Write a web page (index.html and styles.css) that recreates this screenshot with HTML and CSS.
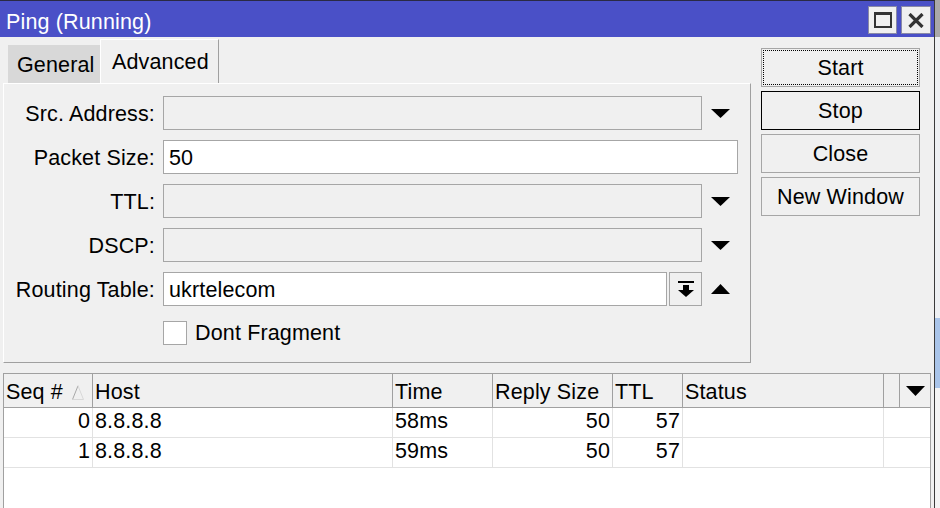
FILE: index.html
```html
<!DOCTYPE html>
<html>
<head>
<meta charset="utf-8">
<title>Ping (Running)</title>
<link rel="stylesheet" href="styles.css">
</head>
<body>
<div class="desktop">
  <div class="window">
    <div class="titlebar">
      <span class="title">Ping (Running)</span>
      <div class="win-ctrls">
        <span class="ctrl">
          <svg width="18" height="16" viewBox="0 0 18 16"><rect x="1" y="1" width="16" height="14" fill="none" stroke="#333" stroke-width="2"/><rect x="0" y="0" width="18" height="3" fill="#333"/></svg>
        </span>
        <span class="ctrl close">
          <svg width="16" height="15" viewBox="0 0 16 15"><path d="M1.5 1 L14.5 14 M14.5 1 L1.5 14" stroke="#333" stroke-width="3.2" fill="none"/></svg>
        </span>
      </div>
    </div>

    <div class="main">
      <div class="left">
        <div class="tabs">
          <div class="tab general">General</div>
          <div class="tab advanced">Advanced</div>
        </div>
        <div class="panel">
          <div class="form">
            <div class="lbl">Src. Address:</div>
            <div class="field">
              <div class="input dis w-drop"></div>
              <span class="slot"><svg width="19" height="9" viewBox="0 0 19 9"><polygon points="0,0 19,0 9.5,9" fill="#000"/></svg></span>
            </div>

            <div class="lbl">Packet Size:</div>
            <div class="field">
              <div class="input w-full">50</div>
            </div>

            <div class="lbl">TTL:</div>
            <div class="field">
              <div class="input dis w-drop"></div>
              <span class="slot"><svg width="19" height="9" viewBox="0 0 19 9"><polygon points="0,0 19,0 9.5,9" fill="#000"/></svg></span>
            </div>

            <div class="lbl">DSCP:</div>
            <div class="field">
              <div class="input dis w-drop"></div>
              <span class="slot"><svg width="19" height="9" viewBox="0 0 19 9"><polygon points="0,0 19,0 9.5,9" fill="#000"/></svg></span>
            </div>

            <div class="lbl">Routing Table:</div>
            <div class="field">
              <div class="input w-route">ukrtelecom</div>
              <span class="rbtn"><svg width="16" height="16" viewBox="0 0 16 16"><rect x="0" y="0" width="16" height="2" fill="#000"/><rect x="5" y="4" width="6" height="6" fill="#000"/><polygon points="0,9 16,9 8,16" fill="#000"/></svg></span>
              <span class="slot"><svg width="19" height="10" viewBox="0 0 19 10"><polygon points="0,10 19,10 9.5,0" fill="#000"/></svg></span>
            </div>

            <div class="lbl"></div>
            <div class="field check">
              <span class="box"></span>
              <span>Dont Fragment</span>
            </div>
          </div>
        </div>
      </div>

      <div class="actions">
        <div class="btn focus">Start</div>
        <div class="btn default">Stop</div>
        <div class="btn">Close</div>
        <div class="btn">New Window</div>
      </div>
    </div>

    <div class="table">
      <div class="row head">
        <div class="c">Seq #<svg class="sort" width="12" height="15" viewBox="0 0 12 15"><path d="M0.5 14.5 L6 0.8" stroke="#a8a8a8" stroke-width="1" fill="none"/><path d="M6 0.8 L11.5 14.5 L0.5 14.5" stroke="#d8d8d8" stroke-width="1" fill="none"/></svg></div>
        <div class="c">Host</div>
        <div class="c">Time</div>
        <div class="c">Reply Size</div>
        <div class="c">TTL</div>
        <div class="c">Status</div>
        <div class="c"></div>
        <div class="c last"><svg width="19" height="10" viewBox="0 0 19 10"><polygon points="0,0 19,0 9.5,10" fill="#000"/></svg></div>
      </div>
      <div class="row data">
        <div class="c num">0</div>
        <div class="c">8.8.8.8</div>
        <div class="c">58ms</div>
        <div class="c num">50</div>
        <div class="c num">57</div>
        <div class="c"></div>
        <div class="c span2"></div>
      </div>
      <div class="row data">
        <div class="c num">1</div>
        <div class="c">8.8.8.8</div>
        <div class="c">59ms</div>
        <div class="c num">50</div>
        <div class="c num">57</div>
        <div class="c"></div>
        <div class="c span2"></div>
      </div>
    </div>
  </div>
  <div class="behind"></div>
</div>
</body>
</html>
```

FILE: styles.css
```css
* { box-sizing: border-box; }

html, body {
  margin: 0;
  padding: 0;
}

body {
  width: 940px;
  height: 508px;
  overflow: hidden;
  font-family: "Liberation Sans", Arial, sans-serif;
  font-size: 21.5px;
  letter-spacing: 0.15px;
  color: #000;
  background: #f0f0f0;
}

.desktop {
  display: flex;
  height: 508px;
}

.window {
  width: 935px;
  height: 508px;
  flex: none;
  display: flex;
  flex-direction: column;
  background: #f0f0f0;
  border-top: 1px solid #2a2a44;
  border-right: 1px solid #3a3a3a;
}

/* title bar */
.titlebar {
  height: 36px;
  flex: none;
  background: #4a50c7;
  color: #fff;
  display: flex;
  align-items: flex-start;
  justify-content: space-between;
}

.title {
  margin: 9px 0 0 6px;
  line-height: 24px;
}

.win-ctrls {
  display: flex;
  gap: 4px;
  margin: 5px 3px 0 0;
}

.ctrl {
  width: 29px;
  height: 28px;
  background: #f0f0f0;
  border: 1px solid #8a8aa6;
  display: flex;
  align-items: center;
  justify-content: center;
}

.ctrl.close { width: 30px; }

/* main area */
.main {
  flex: none;
  display: flex;
  padding-top: 2px;
}

.left {
  margin-left: 3px;
  width: 748px;
}

.tabs {
  display: flex;
  height: 44px;
}

.tab {
  display: flex;
  align-items: center;
}

.tab.general {
  margin: 6px 0 0 5px;
  width: 92px;
  height: 38px;
  padding: 2px 0 0 9px;
  background: #d8d8d8;
}

.tab.advanced {
  width: 119px;
  height: 44px;
  padding: 1px 0 0 11px;
  border-top: 1px solid #fff;
  border-left: 1px solid #fff;
  border-right: 1px solid #a0a0a0;
}

.panel {
  height: 280px;
  border: 1px solid;
  border-color: #fff #a0a0a0 #a0a0a0 #fff;
  padding-top: 12px;
}

.form {
  display: grid;
  grid-template-columns: 151px 575px;
  grid-auto-rows: 34px;
  column-gap: 8px;
  row-gap: 10px;
}

.lbl {
  display: flex;
  align-items: center;
  justify-content: flex-end;
  padding-top: 2px;
}

.field {
  display: flex;
  align-items: stretch;
}

.input {
  border: 1px solid #a6a6a6;
  background: #fff;
  display: flex;
  align-items: center;
  padding: 2px 0 0 5px;
}

.input.dis { background: #f0f0f0; }
.input.w-drop { width: 539px; }
.input.w-full { width: 575px; }
.input.w-route { width: 504px; }

.slot {
  width: 36px;
  display: flex;
  align-items: center;
  justify-content: center;
}

.rbtn {
  width: 33px;
  margin-left: 2px;
  border: 1px solid #a6a6a6;
  background: #f0f0f0;
  display: flex;
  align-items: center;
  justify-content: center;
}

.field.check {
  align-items: center;
  gap: 8px;
}

.box {
  width: 24px;
  height: 24px;
  background: #fff;
  border: 1px solid #a6a6a6;
}

/* action buttons */
.actions {
  margin: 9px 0 0 10px;
  width: 159px;
  display: flex;
  flex-direction: column;
  gap: 4px;
}

.btn {
  height: 39px;
  border: 1px solid #a6a6a6;
  background: #f0f0f0;
  display: flex;
  align-items: center;
  justify-content: center;
  padding-top: 2px;
}

.btn.focus {
  outline: 1px dotted #000;
  outline-offset: -3px;
}

.btn.default { border-color: #000; }

/* results table */
.table {
  margin: 10px 0 0 3px;
  width: 928px;
  flex: 1;
  background: #fff;
  border: 1px solid #a0a0a0;
  border-bottom: none;
  display: flex;
  flex-direction: column;
}

.row {
  display: grid;
  grid-template-columns: 89px 300px 100px 120px 70px 201px 16px 30px;
}

.head .c {
  height: 34px;
  background: #f0f0f0;
  border-right: 1px solid #a0a0a0;
  border-bottom: 1px solid #a0a0a0;
  display: flex;
  align-items: center;
  padding: 3px 0 0 2px;
  white-space: nowrap;
}

.head .c.last {
  border-right: none;
  justify-content: center;
  padding: 0;
}

.sort { margin-left: 9px; }

.data .c {
  height: 30px;
  border-right: 1px solid #e2e2e2;
  border-bottom: 1px solid #e2e2e2;
  display: flex;
  align-items: center;
  padding: 0 2px 3px 2px;
}

.data .c.num { justify-content: flex-end; }

.data .c.span2 {
  grid-column: span 2;
  border-right: none;
}

/* window behind, visible at the right edge */
.behind {
  width: 5px;
  height: 508px;
  flex: none;
  background: linear-gradient(to bottom,
    #a9a9a9 0, #a9a9a9 37px,
    #eef0f3 37px, #eef0f3 318px,
    #a9c4e9 318px, #a9c4e9 388px,
    #f4f4f4 388px, #f4f4f4 508px);
}
```
